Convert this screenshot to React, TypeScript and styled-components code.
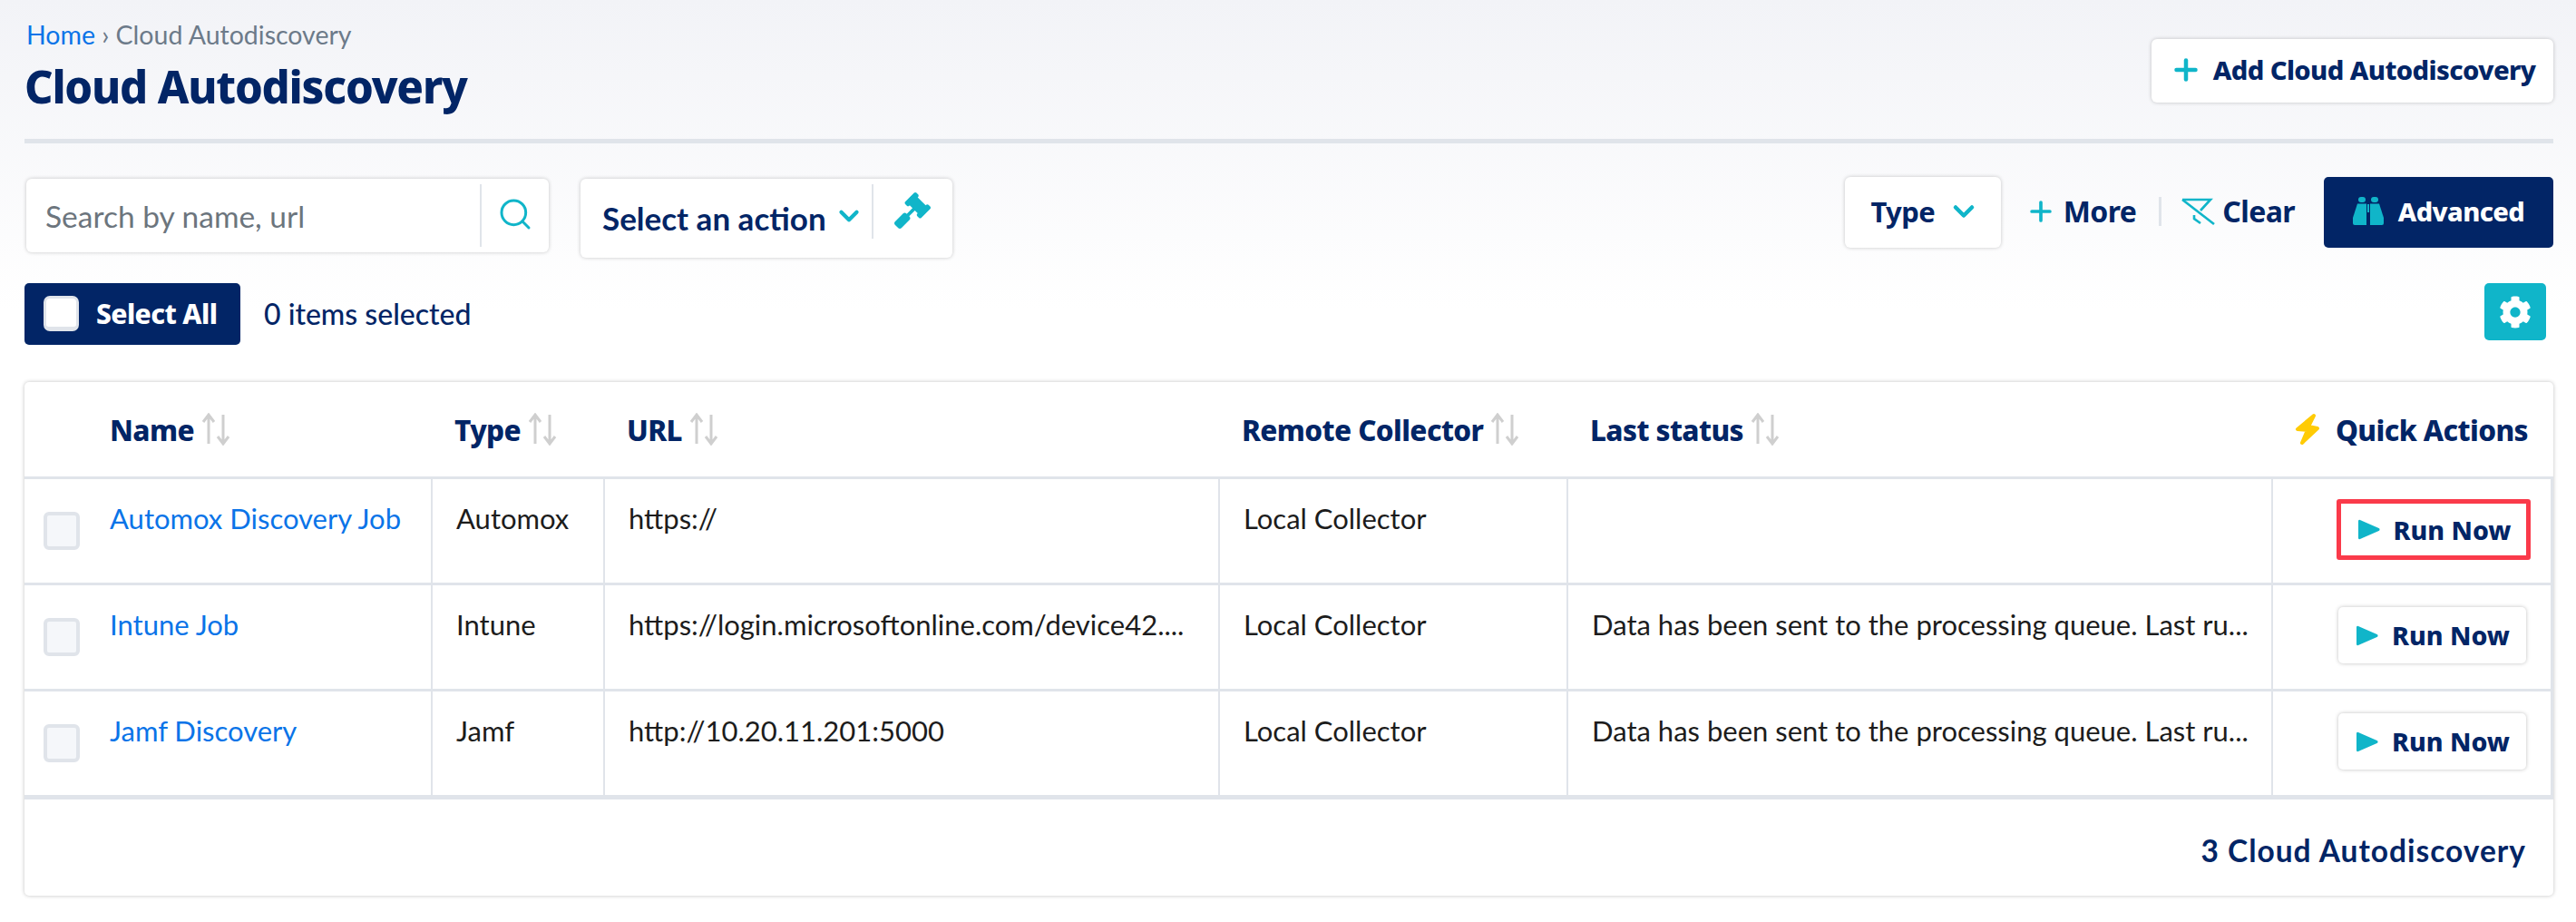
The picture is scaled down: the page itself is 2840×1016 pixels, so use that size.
import * as React from "react";
import styled, { createGlobalStyle } from "styled-components";
import { ChevronDown, Plus, Search } from "lucide-react";
import { FaCog, FaGavel } from "react-icons/fa";

const navy = "#022566";
const teal = "#10b5c9";
const line = "#e0e4ea";
const bodyFont = `Lato, "Liberation Sans", sans-serif`;
const headFont = `"Noto Sans", "Liberation Sans", sans-serif`;

interface Job {
  name: string;
  type: string;
  url: string;
  collector: string;
  status: string;
  flagged?: boolean;
}

const jobs: Job[] = [
  { name: "Automox Discovery Job", type: "Automox", url: "https://", collector: "Local Collector", status: "", flagged: true },
  {
    name: "Intune Job",
    type: "Intune",
    url: "https://login.microsoftonline.com/device42....",
    collector: "Local Collector",
    status: "Data has been sent to the processing queue. Last ru...",
  },
  {
    name: "Jamf Discovery",
    type: "Jamf",
    url: "http://10.20.11.201:5000",
    collector: "Local Collector",
    status: "Data has been sent to the processing queue. Last ru...",
  },
];

const columns = [
  { title: "Name", width: 360 },
  { title: "Type", width: 190 },
  { title: "URL", width: 678 },
  { title: "Remote Collector", width: 384 },
  { title: "Last status", width: 777 },
];

function SortArrows() {
  return (
    <SortIcon viewBox="0 0 32 36" aria-hidden="true">
      <path d="M8 34V3M2 10l6-8 6 8" />
      <path d="M24 2v31M18 26l6 8 6-8" />
    </SortIcon>
  );
}

function ClearIcon() {
  return (
    <svg width="37" height="30" viewBox="0 0 37 30" fill="none" stroke={teal} strokeWidth="2.6" aria-hidden="true">
      <path d="M1 2h31L21 14" />
      <path d="M1 2l35 27" />
      <path d="M14 19v4l7 5" />
    </svg>
  );
}

function BinocularsIcon() {
  return (
    <svg width="34" height="31" viewBox="0 0 34 31" fill={teal} aria-hidden="true">
      <rect x="6" y="0" width="8" height="6" rx="3" />
      <rect x="20" y="0" width="8" height="6" rx="3" />
      <path d="M5 7.500h10V31H2a2 2 0 0 1-2-2v-6z" />
      <path d="M29 7.500H19V31h13a2 2 0 0 0 2-2v-6z" />
      <rect x="16" y="8" width="2" height="9" />
    </svg>
  );
}

function PlayIcon() {
  return (
    <svg width="24" height="25" viewBox="0 0 25 25" aria-hidden="true">
      <path d="M2 1.500L23.500 11a1.600 1.600 0 0 1 0 3L2 23.500a1.400 1.400 0 0 1-2-1.300V2.800a1.400 1.400 0 0 1 2-1.300z" fill={teal} />
    </svg>
  );
}

function BoltIcon() {
  return (
    <svg width="28" height="36" viewBox="0 0 28 36" aria-hidden="true">
      <path
        d="M21 3L3 18l11 1-6 14 17-16-10-2z"
        fill="#ffcb05"
        stroke="#ffcb05"
        strokeWidth="4"
        strokeLinejoin="round"
      />
    </svg>
  );
}

export default function App() {
  return (
    <>
      <GlobalStyle />
      <Page>
        <Header>
          <div>
            <Breadcrumb>
              <a>Home</a> › Cloud Autodiscovery
            </Breadcrumb>
            <Title>Cloud Autodiscovery</Title>
          </div>
          <AddButton>
            <Plus size={36} color={teal} strokeWidth={3} />
            Add Cloud Autodiscovery
          </AddButton>
        </Header>

        <FilterBar>
          <FilterGroup>
            <SearchBox>
              <SearchInput placeholder="Search by name, url" />
              <SearchAddon>
                <Search size={40} color={teal} strokeWidth={1.8} />
              </SearchAddon>
            </SearchBox>
            <ActionSelect>
              <ActionLabel>Select an action</ActionLabel>
              <ActionChevron>
                <ChevronDown size={34} color={teal} strokeWidth={3} />
              </ActionChevron>
              <ActionAddon>
                <FaGavel size={40} color={teal} />
              </ActionAddon>
            </ActionSelect>
          </FilterGroup>
          <FilterTools>
            <TypeSelect>
              Type
              <ChevronDown size={36} color={teal} strokeWidth={3} />
            </TypeSelect>
            <LinkTool $ml={27}>
              <Plus size={34} color={teal} strokeWidth={2.6} />
              More
            </LinkTool>
            <ToolDivider />
            <LinkTool>
              <ClearIcon />
              Clear
            </LinkTool>
            <AdvancedButton>
              <BinocularsIcon />
              Advanced
            </AdvancedButton>
          </FilterTools>
        </FilterBar>

        <SelectionBar>
          <SelectAll>
            <WhiteBox />
            Select All
          </SelectAll>
          <SelectedCount>0 items selected</SelectedCount>
          <GearButton>
            <FaCog size={36} color="#fff" />
          </GearButton>
        </SelectionBar>

        <Card>
          <Table>
            <colgroup>
              <col style={{ width: 88 }} />
              {columns.map((c) => (
                <col key={c.title} style={{ width: c.width }} />
              ))}
              <col />
            </colgroup>
            <thead>
              <tr>
                <HeadCell />
                {columns.map((c) => (
                  <HeadCell key={c.title}>
                    <HeadInner>
                      {c.title}
                      <SortArrows />
                    </HeadInner>
                  </HeadCell>
                ))}
                <HeadCell>
                  <QuickHead>
                    <BoltIcon />
                    Quick Actions
                  </QuickHead>
                </HeadCell>
              </tr>
            </thead>
            <tbody>
              {jobs.map((job) => (
                <tr key={job.name}>
                  <CheckCell>
                    <RowCheck />
                  </CheckCell>
                  <NameCell>
                    <JobLink>{job.name}</JobLink>
                  </NameCell>
                  <Cell>{job.type}</Cell>
                  <Cell>{job.url}</Cell>
                  <Cell>{job.collector}</Cell>
                  <Cell>{job.status}</Cell>
                  <ActionCell>
                    <RunButton $flagged={job.flagged}>
                      <PlayIcon />
                      Run Now
                    </RunButton>
                  </ActionCell>
                </tr>
              ))}
            </tbody>
          </Table>
          <CardFooter>3 Cloud Autodiscovery</CardFooter>
        </Card>
      </Page>
    </>
  );
}

const GlobalStyle = createGlobalStyle`
  html, body {
    margin: 0;
    background: #fff;
  }
  body {
    font-family: ${bodyFont};
    color: #1c1c1c;
  }
  * {
    box-sizing: border-box;
  }
`;

const Page = styled.div`
  width: 2840px;
  height: 1016px;
  padding: 0 25px 0 27px;
  overflow: hidden;
  background: linear-gradient(180deg, #f2f3f7 0, #ffffff 340px);
`;

const Header = styled.header`
  height: 158px;
  padding-top: 22px;
  display: flex;
  justify-content: space-between;
  align-items: flex-start;
  border-bottom: 5px solid ${line};
`;

const Breadcrumb = styled.div`
  font-size: 28.5px;
  line-height: 32px;
  color: #6c7a89;
  padding-left: 2px;
  a {
    color: #0a74e8;
  }
`;

const Title = styled.h1`
  margin: 10px 0 0;
  font-family: ${headFont};
  font-size: 49px;
  line-height: 62px;
  font-weight: 800;
  letter-spacing: -1.2px;
  color: ${navy};
`;

const AddButton = styled.button`
  margin-top: 21px;
  width: 443px;
  height: 70px;
  padding: 0 0 3px;
  display: flex;
  align-items: center;
  justify-content: center;
  gap: 12px;
  border: 0;
  border-radius: 6px;
  background: #fff;
  box-shadow: 0 0 4px rgba(0, 0, 0, 0.22);
  font-family: ${headFont};
  font-size: 29.2px;
  font-weight: 800;
  letter-spacing: -0.6px;
  color: ${navy};
`;

const FilterBar = styled.div`
  margin-top: 37px;
  display: flex;
  justify-content: space-between;
  align-items: flex-start;
`;

const FilterGroup = styled.div`
  display: flex;
  gap: 35px;
  padding-left: 2px;
  padding-top: 2px;
`;

const WhiteBox = styled.span`
  width: 39px;
  height: 39px;
  background: #fff;
  border: 3px solid ${line};
  border-bottom-width: 5px;
  border-radius: 7px;
`;

const SearchBox = styled.div`
  width: 576px;
  height: 81px;
  display: flex;
  align-items: stretch;
  padding: 6px 0;
  background: #fff;
  border-radius: 6px;
  box-shadow: 0 0 4px rgba(0, 0, 0, 0.22);
`;

const SearchInput = styled.input`
  flex: 1;
  min-width: 0;
  border: 0;
  outline: 0;
  padding: 0 0 0 21px;
  background: transparent;
  font-family: ${bodyFont};
  font-size: 33.5px;
  color: #6c757d;
  &::placeholder {
    color: #6c757d;
    opacity: 1;
  }
`;

const SearchAddon = styled.div`
  width: 76px;
  padding-bottom: 4px;
  display: flex;
  align-items: center;
  justify-content: center;
  border-left: 2px solid ${line};
`;

const ActionSelect = styled.div`
  width: 410px;
  height: 87px;
  display: flex;
  align-items: flex-start;
  padding: 6px 0 0 24px;
  background: #fff;
  border-radius: 6px;
  box-shadow: 0 0 4px rgba(0, 0, 0, 0.22);
`;

const ActionLabel = styled.span`
  margin-top: 16px;
  margin-right: 8px;
  font-size: 35px;
  line-height: 42px;
  font-weight: 700;
  color: ${navy};
`;

const ActionChevron = styled.span`
  margin-top: 18px;
  height: 34px;
`;

const ActionAddon = styled.div`
  margin-left: 8px;
  flex: 1;
  height: 60px;
  display: flex;
  justify-content: center;
  border-left: 2px solid ${line};
  svg {
    margin-top: 9px;
  }
`;

const FilterTools = styled.div`
  display: flex;
  align-items: center;
`;

const TypeSelect = styled.div`
  width: 172px;
  height: 78px;
  padding: 0 0 3px 6px;
  display: flex;
  align-items: center;
  justify-content: center;
  gap: 14px;
  background: #fff;
  border-radius: 6px;
  box-shadow: 0 0 4px rgba(0, 0, 0, 0.22);
  font-family: ${headFont};
  font-size: 31px;
  font-weight: 700;
  letter-spacing: -0.6px;
  color: ${navy};
`;

const LinkTool = styled.div<{ $ml?: number }>`
  margin-left: ${(p) => p.$ml ?? 0}px;
  padding-bottom: 3px;
  display: flex;
  align-items: center;
  gap: 8px;
  font-family: ${headFont};
  font-size: 32px;
  font-weight: 700;
  letter-spacing: -0.6px;
  color: ${navy};
`;

const ToolDivider = styled.span`
  width: 3px;
  height: 32px;
  margin: 0 22px 3px 25px;
  background: ${line};
`;

const AdvancedButton = styled.button`
  margin-left: 32px;
  width: 253px;
  height: 78px;
  padding: 0 0 3px;
  display: flex;
  align-items: center;
  justify-content: center;
  gap: 16px;
  border: 0;
  border-radius: 5px;
  background: ${navy};
  font-family: ${headFont};
  font-size: 29px;
  font-weight: 800;
  letter-spacing: -0.6px;
  color: #fff;
`;

const SelectionBar = styled.div`
  margin-top: 28px;
  height: 68px;
  display: flex;
  align-items: flex-start;
`;

const SelectAll = styled.button`
  width: 238px;
  height: 68px;
  display: flex;
  align-items: center;
  gap: 19px;
  padding: 0 0 2px 21px;
  border: 0;
  border-radius: 5px;
  background: ${navy};
  font-family: ${headFont};
  font-size: 30px;
  font-weight: 800;
  letter-spacing: -0.6px;
  color: #fff;
`;

const SelectedCount = styled.span`
  margin-left: 26px;
  font-size: 32px;
  line-height: 68px;
  font-weight: 500;
  color: ${navy};
`;

const GearButton = styled.button`
  margin-left: auto;
  margin-right: 8px;
  width: 68px;
  height: 63px;
  display: flex;
  align-items: center;
  justify-content: center;
  border: 0;
  border-radius: 5px;
  background: ${teal};
`;

const Card = styled.section`
  margin-top: 41px;
  height: 566px;
  background: #fff;
  border-radius: 5px;
  box-shadow: 0 0 4px rgba(0, 0, 0, 0.25);
`;

const Table = styled.table`
  width: 100%;
  table-layout: fixed;
  border-collapse: separate;
  border-spacing: 0;
`;

const HeadCell = styled.th`
  height: 107px;
  padding: 0 0 0 26px;
  text-align: left;
  white-space: nowrap;
  border-bottom: 3px solid ${line};
  font-family: ${headFont};
  font-size: 31.5px;
  font-weight: 800;
  letter-spacing: -0.6px;
  color: ${navy};
  &:first-child {
    padding: 0;
  }
  &:nth-child(2) {
    padding-left: 6px;
  }
`;

const HeadInner = styled.span`
  display: inline-flex;
  align-items: center;
  gap: 8px;
`;

const SortIcon = styled.svg`
  width: 32px;
  height: 36px;
  fill: none;
  stroke: #cfcfcf;
  stroke-width: 3;
`;

const QuickHead = styled.span`
  display: flex;
  align-items: center;
  justify-content: flex-end;
  gap: 17px;
  padding-right: 28px;
`;

const Cell = styled.td`
  height: 117px;
  padding: 23px 0 0 26px;
  vertical-align: top;
  white-space: nowrap;
  border-left: 2px solid ${line};
  border-bottom: 3px solid ${line};
  font-size: 31px;
  line-height: 40px;
  color: #1c1c1c;
  tr:last-child & {
    height: 119px;
    border-bottom-width: 5px;
  }
`;

const CheckCell = styled(Cell)`
  padding: 36px 0 0 21px;
  border-left: 0;
`;

const NameCell = styled(Cell)`
  padding-left: 6px;
  border-left: 0;
`;

const ActionCell = styled(Cell)`
  padding: 24px 27px 0 0;
  border-right: 3px solid ${line};
`;

const RowCheck = styled.span`
  display: block;
  width: 40px;
  height: 42px;
  background: #f5f7fa;
  border: 4px solid ${line};
  border-radius: 6px;
`;

const JobLink = styled.a`
  color: #0a74e8;
`;

const RunButton = styled.button<{ $flagged?: boolean }>`
  margin: ${(p) => (p.$flagged ? "-2px -5px 0 auto" : "0 0 0 auto")};
  width: ${(p) => (p.$flagged ? 214 : 207)}px;
  height: ${(p) => (p.$flagged ? 67 : 62)}px;
  display: flex;
  align-items: center;
  justify-content: center;
  gap: 15px;
  padding: 0 0 0 2px;
  background: #fff;
  border: ${(p) => (p.$flagged ? "5px solid #fa3a4a" : "0")};
  border-radius: ${(p) => (p.$flagged ? 3 : 5)}px;
  box-shadow: ${(p) => (p.$flagged ? "none" : "0 0 4px rgba(0, 0, 0, 0.25)")};
  font-family: ${headFont};
  font-size: 28.5px;
  font-weight: 800;
  color: ${navy};
  svg {
    flex: none;
  }
`;

const CardFooter = styled.div`
  height: 102px;
  padding: 36px 30px 0 0;
  text-align: right;
  font-size: 33.5px;
  font-weight: 700;
  letter-spacing: 1px;
  color: ${navy};
`;
